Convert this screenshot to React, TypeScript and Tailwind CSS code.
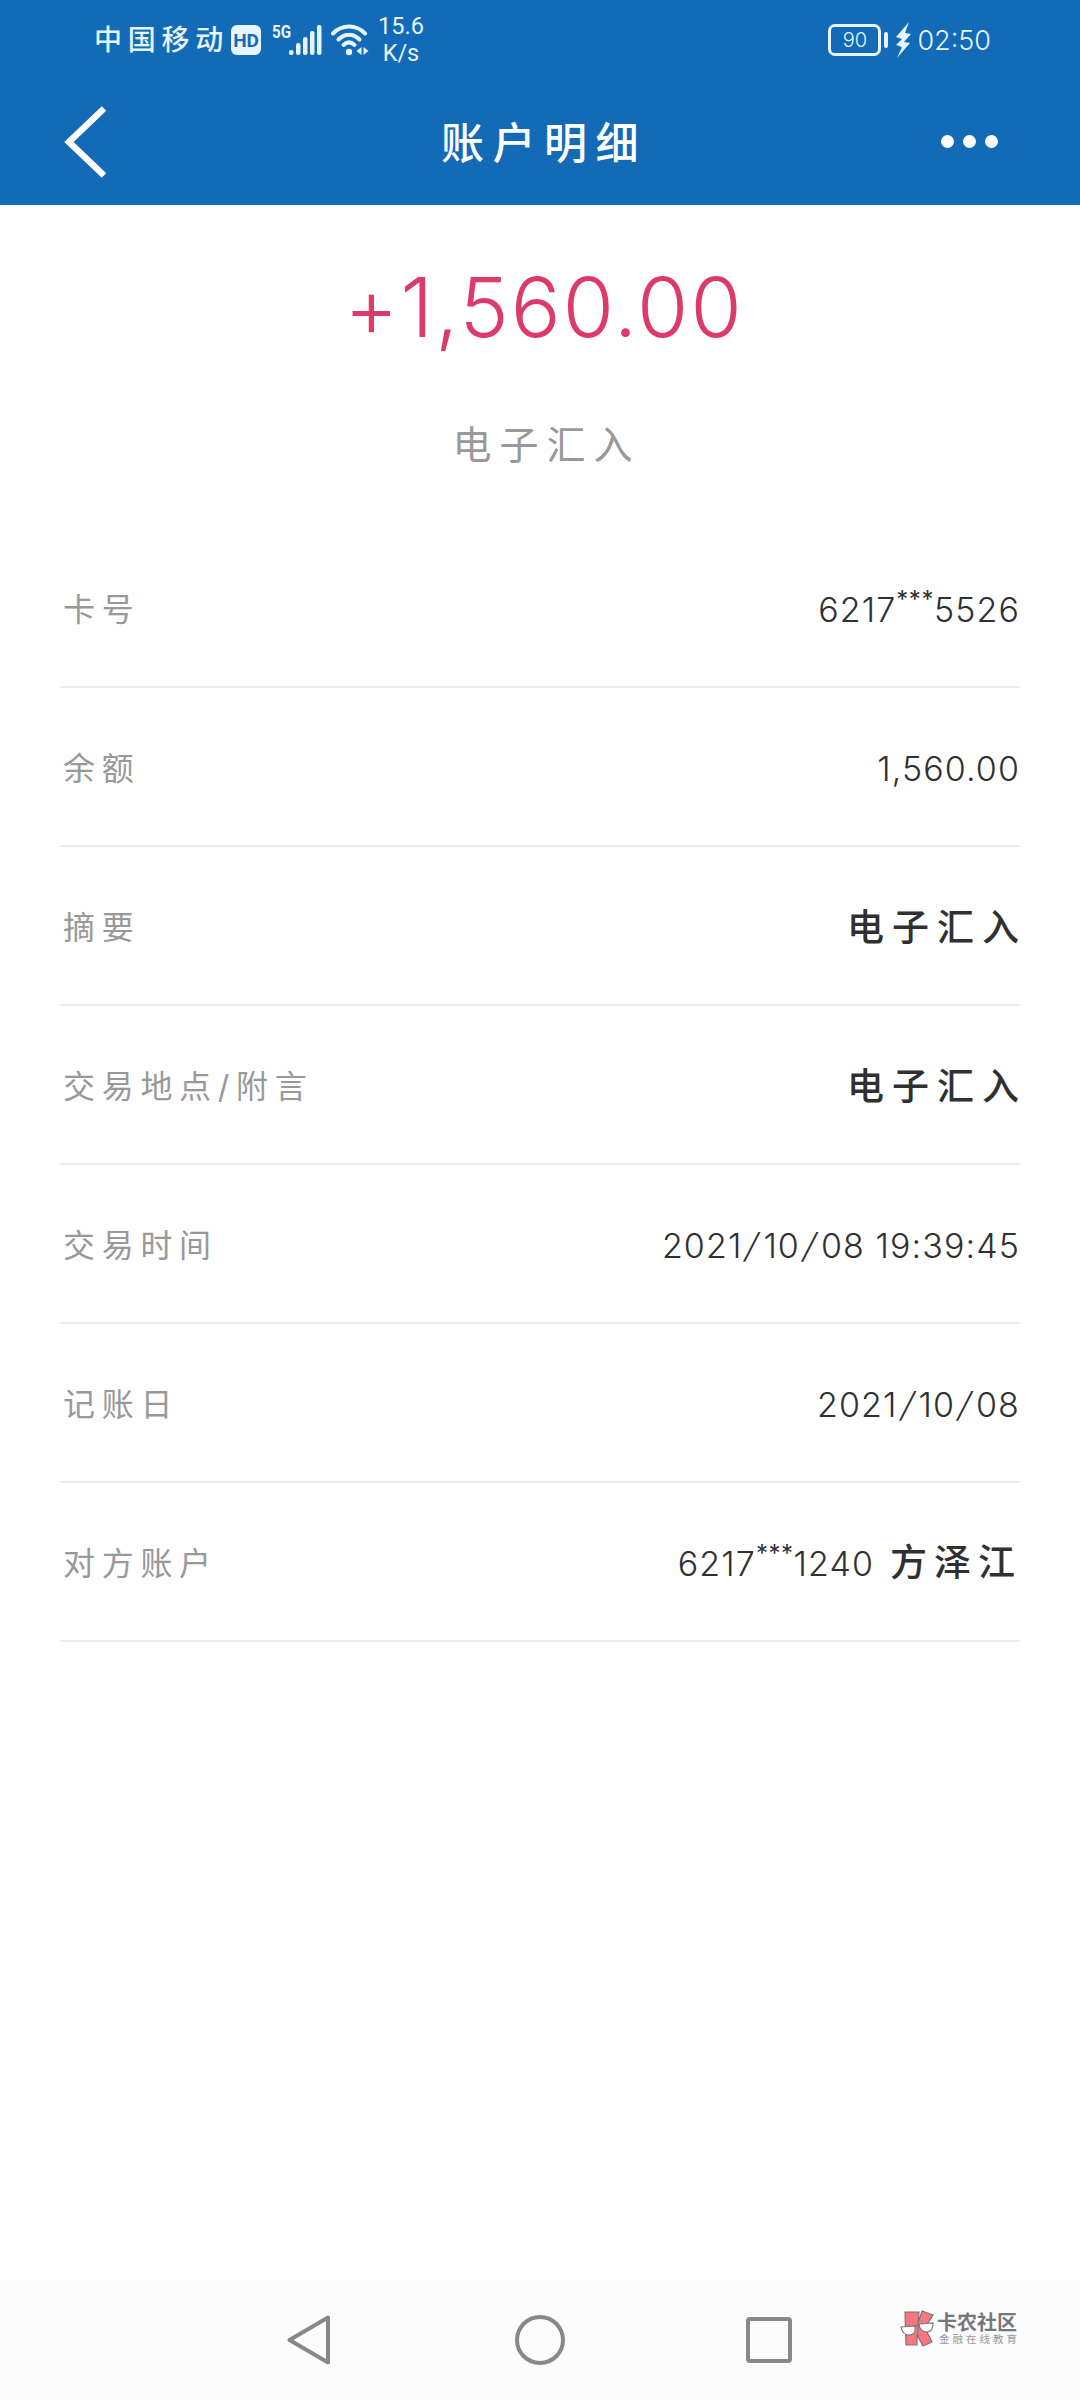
import type { ReactNode } from 'react';

const Mask = () => (
  <span className="relative -top-[14px] text-[24px] font-normal tracking-[0.5px]">***</span>
);

const Slash = () => <span className="mx-[4px] inline-block -skew-x-[14deg]">/</span>;

type Row = { label: string; value: ReactNode; hanzi?: boolean };

const rows: Row[] = [
  { label: '卡号', value: <>6217<Mask />5526</> },
  { label: '余额', value: '1,560.00' },
  { label: '摘要', value: '电子汇入', hanzi: true },
  { label: '交易地点/附言', value: '电子汇入', hanzi: true },
  { label: '交易时间', value: <>2021<Slash />10<Slash />08 19:39:45</> },
  { label: '记账日', value: <>2021<Slash />10<Slash />08</> },
  {
    label: '对方账户',
    value: (
      <>
        6217<Mask />1240
        <span className="ml-4 text-[37px] leading-none font-medium tracking-[7px] -mr-[2px]">方泽江</span>
      </>
    ),
  },
];

function StatusBar() {
  return (
    <div className="flex h-20 items-center pl-[94px] pr-[89px] text-[#e6f4ff]">
      <span className="text-[28px] leading-none font-medium tracking-[5.750px]">中国移动</span>
      <span className="ml-[2px] flex h-[30px] w-[30px] items-center justify-center rounded-[6px] bg-[#e6f4ff] font-['Roboto',sans-serif] text-[19px] leading-none font-bold text-[#136ab6]">
        HD
      </span>
      <span className="mb-[18px] ml-[11px] w-[17px] origin-left scale-x-[0.8] font-['Roboto',sans-serif] text-[19px] leading-none font-bold">
        5G
      </span>
      <svg className="h-8 w-[34px]" viewBox="0 0 34 32" fill="currentColor">
        <rect x="0" y="26" width="4.5" height="5" rx="2" />
        <rect x="7" y="19" width="4.5" height="12" rx="2" />
        <rect x="14" y="13" width="4.5" height="18" rx="2" />
        <rect x="21" y="7" width="4.5" height="24" rx="2" />
        <rect x="28" y="1" width="4.5" height="30" rx="2" />
      </svg>
      <svg className="ml-[8px] h-8 w-[38px]" viewBox="0 0 38 32" fill="none" stroke="currentColor" strokeWidth="4" strokeLinecap="round">
        <path d="M2 9.500C11 .2 25 .2 34 9.500" />
        <path d="M7.500 15.500C14 9 22 9 28.500 15.500" />
        <path d="M12.500 21C16 17.700 20 17.700 23.500 21" />
        <circle cx="18" cy="28" r="3.200" fill="currentColor" stroke="none" />
        <path d="M30.500 23v8l-5-4zM32.500 23v8l5-4z" fill="currentColor" stroke="none" />
      </svg>
      <div className="ml-[9px] text-center font-['Roboto',sans-serif] text-[23.500px] leading-[27px]">
        <div>15.6</div>
        <div>K/s</div>
      </div>

      <div className="ml-auto flex items-center">
        <span className="flex h-8 w-[53px] items-center justify-center rounded-[7px] border-[3px] border-current text-[20px] leading-none font-light">
          90
        </span>
        <span className="ml-[3px] h-4 w-1 rounded-full bg-current" />
        <svg className="ml-[6px] h-9 w-[18px]" viewBox="0 0 18 36" fill="currentColor">
          <path d="M15 0 2 15l6 2-6 6 6 2-5 11 13-15-6-1 7-8-6-1z" />
        </svg>
        <span className="ml-[5px] text-[27px] leading-none font-light">02:50</span>
      </div>
    </div>
  );
}

function TitleBar() {
  return (
    <div className="flex h-[123px] items-center pr-[82px] pl-[62px]">
      <svg className="h-[78px] w-12" viewBox="0 0 48 78" fill="none" stroke="#fff" strokeWidth="6.500">
        <path d="M42 5.500 7 39l35 33.500" />
      </svg>
      <h1 className="mt-1 ml-[331px] text-[43px] leading-none font-medium tracking-[8.500px] text-white">账户明细</h1>
      <div className="ml-auto flex gap-[9px]">
        <span className="h-[13px] w-[13px] rounded-full bg-white" />
        <span className="h-[13px] w-[13px] rounded-full bg-white" />
        <span className="h-[13px] w-[13px] rounded-full bg-white" />
      </div>
    </div>
  );
}

function Watermark() {
  return (
    <div className="absolute top-[30px] left-[900px] flex items-center whitespace-nowrap">
      <svg className="h-[38px] w-[36px]" viewBox="0 0 36 38" stroke="#777" strokeWidth="1.200">
        <path d="M5 2h14l-1 11 4-12 11 4-8 13 7 14-9 4-6-11v10H6z" fill="#f9767f" />
        <path d="M18 13v13" fill="none" />
        <path d="M1 17l14-1c1 6-1 9-6 9s-7-3-8-8zM19 14l14-1c0 6-2 9-6 9s-8-3-8-8z" fill="#fff" />
        <path d="M15 17c1-2 3-3 4-2" fill="none" />
      </svg>
      <div className="ml-[1px]">
        <div className="text-[20px] leading-[22px] font-bold text-[#777]">卡农社区</div>
        <div className="-mt-px ml-[2px] text-[10.500px] leading-[14px] tracking-[3px] text-[#999]">金融在线教育</div>
      </div>
    </div>
  );
}

export default function App() {
  return (
    <div className="flex h-[2400px] w-[1080px] flex-col bg-[#fefefe] font-['Inter','Noto_Sans_CJK_SC',sans-serif] whitespace-nowrap">
      <header className="h-[205px] shrink-0 bg-[#136ab6]">
        <StatusBar />
        <TitleBar />
      </header>

      <main className="flex-1 px-[60px]">
        <div className="flex h-[324px] flex-col items-center">
          <div className="mt-[52px] pl-[8px] text-[83px] leading-[100px] font-light tracking-[2px] text-[#dc3a69]">+1,560.00</div>
          <div className="mt-[63px] pl-[13px] text-[39px] leading-[50px] tracking-[8px] text-[#999]">电子汇入</div>
        </div>
        {rows.map(row => (
          <div key={row.label} className="flex h-[159px] items-center justify-between border-b-2 border-[#ececec] pt-[4px]">
            <span className="pl-[3px] text-[32px] tracking-[6.700px] text-[#999]">{row.label}</span>
            <span
              className={
                row.hanzi
                  ? 'text-[37px] font-medium tracking-[8px] -mr-[7px] text-[#303030]'
                  : 'text-[34px] font-light tracking-[1.100px] text-[#303030]'
              }
            >
              {row.value}
            </span>
          </div>
        ))}
      </main>

      <nav className="relative flex h-[120px] shrink-0 items-center bg-[#fcfcfc] pl-[286px]">
        <svg className="h-[52px] w-[46px]" viewBox="0 0 46 52" fill="none" stroke="#888" strokeWidth="4" strokeLinejoin="round">
          <path d="M42 3.500v45L3.500 26z" />
        </svg>
        <span className="ml-[183px] h-[50px] w-[50px] rounded-full border-4 border-[#888]" />
        <span className="ml-[181px] h-[46px] w-[46px] rounded-[4px] border-4 border-[#888]" />
        <Watermark />
      </nav>
    </div>
  );
}
